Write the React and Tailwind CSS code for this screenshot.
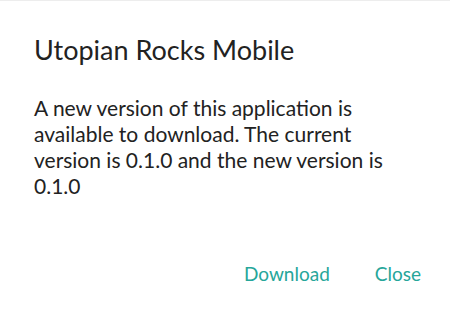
export default function App() {
  return (
    <div className="w-[450px] h-[316px] bg-white border-t border-[#ededed] flex flex-col font-['Lato',sans-serif] text-[#222]">
      <div className="px-[34px] pt-[33px]">
        <h4 className="text-[27px] leading-[32px]">Utopian Rocks Mobile</h4>
        <p className="mt-[29px] text-[21px] leading-[26px]">
          A new version of this application is available to download. The current version is 0.1.0 and the new version is 0.1.0
        </p>
      </div>
      <div className="mt-auto flex justify-end items-center gap-[45px] pr-[29px] pb-[28px] text-[19px] text-[#26a69a]">
        <button>Download</button>
        <button>Close</button>
      </div>
    </div>
  );
}
